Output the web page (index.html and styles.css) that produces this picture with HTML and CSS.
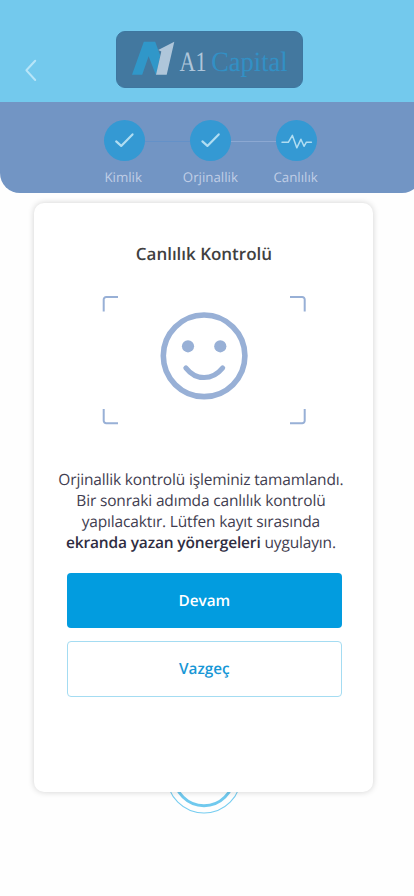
FILE: index.html
```html
<!DOCTYPE html>
<html lang="tr">
<head>
<meta charset="utf-8">
<meta name="viewport" content="width=device-width, initial-scale=1">
<title>Canlılık Kontrolü</title>
<link rel="stylesheet" href="styles.css">
</head>
<body>
<div class="screen">
  <header class="topbar">
    <svg class="back" width="14" height="24" viewBox="0 0 14 24"><path d="M11.2 2.8 2.4 12.3l8.8 9.7"/></svg>
    <div class="logo">
      <svg width="187" height="57" viewBox="0 0 187 57">
        <path fill="#3097c9" d="M16 43.8 27.8 10.8h11.4l5 13.6-3.9 19.4h-.5l-7.2-18.6-6.4 18.6z"/>
        <path fill="#afc6da" d="M40 43.8 45.3 20.5l-3.1-1.6L58.3 10.8l-7.6 33z"/>
        <text class="logo-a" x="63.5" y="39.8" textLength="27" lengthAdjust="spacingAndGlyphs">A1</text>
        <text class="logo-c" x="95.2" y="39.8" textLength="76.5" lengthAdjust="spacingAndGlyphs">Capital</text>
      </svg>
    </div>
  </header>
  <nav class="steps">
    <div class="step">
      <span class="dot"><svg width="41" height="41" viewBox="0 0 41 41"><path class="check" d="m12.2 21.4 5 4.5L28.5 14.4"/></svg></span>
      <span class="label kimlik">Kimlik</span>
    </div>
    <i class="line done"></i>
    <div class="step">
      <span class="dot"><svg width="41" height="41" viewBox="0 0 41 41"><path class="check" d="m12.4 21.4 5 4.5L28.7 14.4"/></svg></span>
      <span class="label">Orjinallik</span>
    </div>
    <i class="line"></i>
    <div class="step">
      <span class="dot"><svg width="41" height="41" viewBox="0 0 41 41"><path class="pulse" d="M6 22.3h6.3l4.1-6.9 4.4 12.4 4.1-8.5 3.1 7 2.4-4.1h5"/></svg></span>
      <span class="label canlilik">Canlılık</span>
    </div>
  </nav>
  <main class="stage">
    <svg class="ring" width="76" height="76" viewBox="0 0 76 76"><circle cx="38" cy="38" r="37"/><circle class="inner" cx="38" cy="38" r="29.7"/></svg>
    <section class="card">
      <h1>Canlılık Kontrolü</h1>
      <svg class="face" width="204" height="130" viewBox="0 0 204 130">
        <path class="corner" d="M1.7 15.5V3.5a2.5 2.5 0 0 1 2.5-2.5H16M188 1h12.2a2.5 2.5 0 0 1 2.5 2.5v12M1.7 113v11.7a2.5 2.5 0 0 0 2.5 2.5H16M188 127.2h12.2a2.5 2.5 0 0 0 2.5-2.5V113"/>
        <circle class="head" cx="102.1" cy="59.8" r="40.8"/>
        <circle class="eye" cx="86" cy="50.3" r="6.1"/>
        <circle class="eye" cx="118.3" cy="50.3" r="6.1"/>
        <path class="mouth" d="M83.8 71.9q7.5 9.7 18.3 9.7t18.6-9.7"/>
      </svg>
      <p>Orjinallik kontrolü işleminiz tamamlandı.<br>Bir sonraki adımda canlılık kontrolü<br>yapılacaktır. Lütfen kayıt sırasında<br><b>ekranda yazan yönergeleri</b> uygulayın.</p>
      <button class="primary">Devam</button>
      <button class="secondary">Vazgeç</button>
    </section>
  </main>
</div>
</body>
</html>
```
FILE: styles.css
```css
* { box-sizing: border-box; }
body { margin: 0; background: #fff; font-family: "Open Sans", sans-serif; text-rendering: geometricPrecision; }
.screen { width: 414px; height: 896px; overflow: hidden; background: #fefefe; }
.topbar { height: 102px; background: #73c9ed; display: flex; align-items: flex-start; }
.back { margin: 58px 0 0 24px; fill: none; stroke: #b7e5f8; stroke-width: 2; stroke-linecap: round; stroke-linejoin: round; }
.logo { width: 187px; height: 57px; margin: 31px 0 0 78px; border-radius: 9px; background: #43789f; border: 1px solid #3e769f; }
.logo svg { display: block; margin: -1px; }
.logo text { font-family: "Liberation Serif", serif; font-size: 28px; }
.logo-a { fill: #afc6da; }
.logo-c { fill: #3290c5; }
.steps { width: 422px; height: 90.7px; background: #7295c4; border-radius: 0 0 20px 20px; display: flex; padding: 18px 0 0 103.7px; }
.step { width: 41px; display: flex; flex-direction: column; align-items: center; }
.dot { width: 41px; height: 41px; border-radius: 50%; background: #3499d3; }
.dot svg { display: block; fill: none; stroke: #b0ddf2; stroke-linejoin: round; stroke-linecap: round; }
.check { stroke-width: 2.2; }
.pulse { stroke-width: 1.5; }
.line { width: 45.2px; height: 1px; margin-top: 21px; background: #8ca8d2; }
.line.done { background: #6491c8; }
.label { margin-top: 6px; font-size: 13.3px; line-height: 20px; color: #c0cee6; white-space: nowrap; }
.kimlik, .canlilik { margin-left: -2px; }
.stage { position: relative; }
.ring { position: absolute; left: 166px; top: 535px; width: 76px; height: 76px; fill: none; stroke: #77cdf0; stroke-width: 1.1; }
.ring .inner { stroke: #70c9ee; stroke-width: 3; }
.card { position: relative; width: 339px; height: 589px; margin: 10.5px 0 0 34.4px; border-radius: 10px; background: #fff; box-shadow: 0 0 6px rgba(0,0,0,.18); display: flex; flex-direction: column; align-items: center; }
h1 { margin: 38.5px 0 0; font-size: 17px; line-height: 24px; font-weight: 600; letter-spacing: -.02px; color: #404040; }
.face { margin-top: 30px; fill: none; stroke: #98b0d6; }
.corner { stroke-width: 2; }
.head { stroke-width: 5.6; }
.eye { fill: #98b0d6; stroke: none; }
.mouth { stroke-width: 5; stroke-linecap: round; }
p { margin: 43.5px 0 0 -6px; width: 320px; text-align: center; font-size: 15.5px; letter-spacing: -.16px; line-height: 21px; color: #3f3d50; white-space: nowrap; }
b { font-weight: 600; color: #2f2d42; }
button { width: 275px; height: 55px; margin-left: 1px; border-radius: 4px; font: 600 15.3px "Open Sans", sans-serif; padding: 0; text-rendering: inherit; }
.primary { margin-top: 20px; border: 0; background: #029cdf; color: #fff; }
.secondary { margin-top: 13px; height: 56px; border: 1px solid #a4dcf2; background: #fff; color: #1797d6; }
```
